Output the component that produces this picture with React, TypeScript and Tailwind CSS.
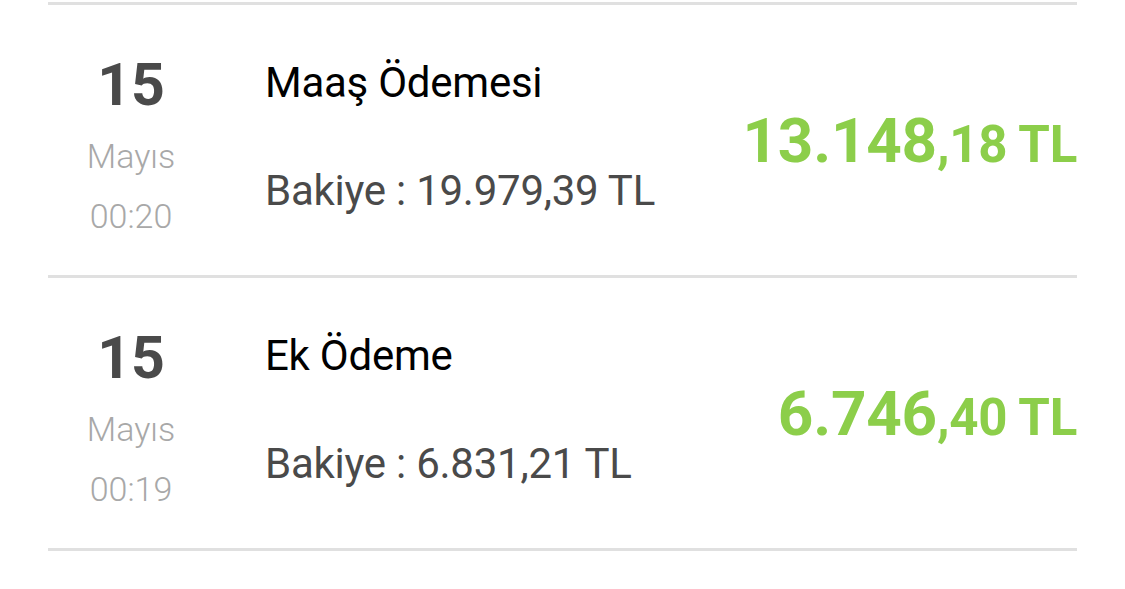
import React from "react";

type Hareket = {
  gun: string;
  ay: string;
  saat: string;
  baslik: string;
  bakiye: string;
  tutar: string;
  kurus: string;
};

const hareketler: Hareket[] = [
  {
    gun: "15",
    ay: "Mayıs",
    saat: "00:20",
    baslik: "Maaş Ödemesi",
    bakiye: "19.979,39 TL",
    tutar: "13.148",
    kurus: ",18 TL",
  },
  {
    gun: "15",
    ay: "Mayıs",
    saat: "00:19",
    baslik: "Ek Ödeme",
    bakiye: "6.831,21 TL",
    tutar: "6.746",
    kurus: ",40 TL",
  },
];

function HareketSatiri({ h }: { h: Hareket }) {
  return (
    <div className="flex h-[273px] border-b-[3px] border-[#e0e0e0]">
      {/* tarih */}
      <div className="w-[166px] shrink-0 pt-[40px] text-center">
        <div className="text-[59px] leading-[80px] font-bold text-[#4a4a4a]">{h.gun}</div>
        <div className="text-[34px] leading-[62px] font-light text-[#a8a8a8]">{h.ay}</div>
        <div className="text-[34px] leading-[58px] font-light text-[#a8a8a8]">{h.saat}</div>
      </div>

      {/* açıklama */}
      <div className="ml-[51px] flex-1 pt-[48px] tracking-[-0.25px]">
        <div className="text-[42px] leading-[60px] text-black">{h.baslik}</div>
        <div className="mt-[48px] text-[42px] leading-[60px] text-[#4a4a4a]">
          Bakiye : {h.bakiye}
        </div>
      </div>

      {/* tutar */}
      <div className="self-center mt-[6px] flex items-baseline font-bold tracking-[-0.25px] text-[#8cce4a] leading-[62px]">
        <span className="text-[62px]">{h.tutar}</span>
        <span className="text-[51px]">{h.kurus}</span>
      </div>
    </div>
  );
}

export default function App() {
  return (
    <div
      className="min-h-[589px] w-full bg-white pt-[2px]"
      style={{ fontFamily: "Roboto, 'Noto Sans', sans-serif" }}
    >
      <div className="mx-[48px] border-t-[3px] border-[#e0e0e0]">
        {hareketler.map((h, i) => (
          <HareketSatiri key={i} h={h} />
        ))}
      </div>
    </div>
  );
}
